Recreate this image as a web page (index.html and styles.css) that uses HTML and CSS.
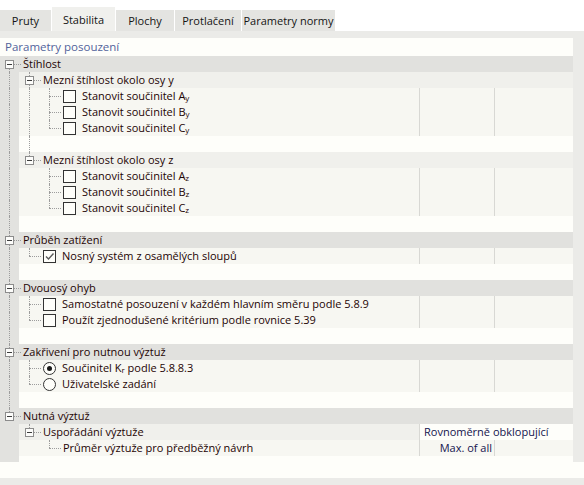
FILE: index.html
```html
<!DOCTYPE html>
<html lang="cs">
<head>
<meta charset="utf-8">
<title>Stabilita</title>
<link rel="stylesheet" href="styles.css">
</head>
<body>
<div class="tabs">
  <div class="tab t1">Pruty</div>
  <div class="tab t2 active">Stabilita</div>
  <div class="tab t3">Plochy</div>
  <div class="tab t4">Protlačení</div>
  <div class="tab t5">Parametry normy</div>
</div>
<div class="panel">
  <div class="pm">
    <div class="tree">
      <div class="hdr">Parametry posouzení</div>

      <div class="row grp"><span class="g vb h"><i class="bx"></i></span><span class="lbl">Štíhlost</span></div>
      <div class="row sub"><span class="g v"></span><span class="c v h"><i class="bx"></i></span><span class="lbl">Mezní štíhlost okolo osy y</span></div>
      <div class="row item"><span class="g v"></span><span class="c v"></span><span class="c v h"></span><span class="lbl"><i class="cb"></i>Stanovit součinitel A<span class="s">y</span></span><span class="col2"></span><span class="col3"></span></div>
      <div class="row item"><span class="g v"></span><span class="c v"></span><span class="c v h"></span><span class="lbl"><i class="cb"></i>Stanovit součinitel B<span class="s">y</span></span><span class="col2"></span><span class="col3"></span></div>
      <div class="row item"><span class="g v"></span><span class="c v"></span><span class="c vt h"></span><span class="lbl"><i class="cb"></i>Stanovit součinitel C<span class="s">y</span></span><span class="col2"></span><span class="col3"></span></div>
      <div class="row gap"><span class="g v"></span><span class="c v"></span></div>
      <div class="row sub"><span class="g v"></span><span class="c vt h"><i class="bx"></i></span><span class="lbl">Mezní štíhlost okolo osy z</span></div>
      <div class="row item"><span class="g v"></span><span class="c"></span><span class="c v h"></span><span class="lbl"><i class="cb"></i>Stanovit součinitel A<span class="s">z</span></span><span class="col2"></span><span class="col3"></span></div>
      <div class="row item"><span class="g v"></span><span class="c"></span><span class="c v h"></span><span class="lbl"><i class="cb"></i>Stanovit součinitel B<span class="s">z</span></span><span class="col2"></span><span class="col3"></span></div>
      <div class="row item"><span class="g v"></span><span class="c"></span><span class="c vt h"></span><span class="lbl"><i class="cb"></i>Stanovit součinitel C<span class="s">z</span></span><span class="col2"></span><span class="col3"></span></div>
      <div class="row gap"><span class="g v"></span></div>

      <div class="row grp"><span class="g v h"><i class="bx"></i></span><span class="lbl">Průběh zatížení</span></div>
      <div class="row item"><span class="g v"></span><span class="c vt h"></span><span class="lbl"><i class="cb on"><svg width="11" height="11" viewBox="0 0 11 11"><path d="M2 5.5 L4.5 8 L9.5 2.5" fill="none" stroke="#5a5a5a" stroke-width="1.4"/></svg></i>Nosný systém z osamělých sloupů</span><span class="col2"></span><span class="col3"></span></div>
      <div class="row gap"><span class="g v"></span></div>

      <div class="row grp"><span class="g v h"><i class="bx"></i></span><span class="lbl">Dvouosý ohyb</span></div>
      <div class="row item"><span class="g v"></span><span class="c v h"></span><span class="lbl"><i class="cb"></i>Samostatné posouzení v každém hlavním směru podle 5.8.9</span><span class="col2"></span><span class="col3"></span></div>
      <div class="row item"><span class="g v"></span><span class="c vt h"></span><span class="lbl"><i class="cb"></i>Použít zjednodušené kritérium podle rovnice 5.39</span><span class="col2"></span><span class="col3"></span></div>
      <div class="row gap"><span class="g v"></span></div>

      <div class="row grp"><span class="g v h"><i class="bx"></i></span><span class="lbl">Zakřivení pro nutnou výztuž</span></div>
      <div class="row item"><span class="g v"></span><span class="c v h"></span><span class="lbl"><i class="rb on"></i>Součinitel K<span class="s">r</span>&nbsp;podle 5.8.8.3</span><span class="col2"></span><span class="col3"></span></div>
      <div class="row item"><span class="g v"></span><span class="c vt h"></span><span class="lbl"><i class="rb"></i>Uživatelské zadání</span><span class="col2"></span><span class="col3"></span></div>
      <div class="row gap"><span class="g v"></span></div>

      <div class="row grp"><span class="g vt h"><i class="bx"></i></span><span class="lbl">Nutná výztuž</span></div>
      <div class="row sub"><span class="g"></span><span class="c vt h"><i class="bx"></i></span><span class="lbl">Uspořádání výztuže</span><span class="colw">Rovnoměrně obklopující</span></div>
      <div class="row item"><span class="g"></span><span class="c"></span><span class="c vt h"></span><span class="lbl">Průměr výztuže pro předběžný návrh</span><span class="col2 val">Max. of all</span><span class="col3"></span></div>
      <div class="tail"><span class="g"></span></div>
    </div>
    <div class="vbar"></div>
  </div>
  <div class="hband"></div>
</div>
</body>
</html>
```

FILE: styles.css
```css
body {
  margin: 0;
  font-family: "Open Sans", "Noto Sans", sans-serif;
  font-size: 11px;
  color: #1e0404;
  background: #ebebe8;
}

.tabs {
  display: flex;
  align-items: flex-end;
  gap: 1px;
  height: 31px;
  background: #ffffff;
}
.tab {
  height: 21px;
  line-height: 21px;
  text-align: center;
  white-space: nowrap;
  background: #e4e4e1;
  color: #141414;
}
.tab.active {
  height: 24px;
  line-height: 26px;
  background: #f0f0ed;
}
.t1 { width: 51px; }
.t2 { width: 63px; }
.t3 { width: 58px; }
.t4 { width: 66px; }
.t5 { width: 93px; }

.panel {
  padding: 7px 0;
}
.pm {
  display: flex;
}
.tree {
  width: 573px;
  background: #fefefa;
}
.vbar {
  flex: 1;
}
.hband {
  height: 16px;
  background: #fefefa;
}

.hdr {
  height: 18px;
  line-height: 18px;
  padding-left: 5px;
  font-size: 11.5px;
  color: #52639a;
}

.row {
  display: flex;
  height: 16px;
  line-height: 16px;
}
.row.grp { background: #e1e1de; }
.row.sub { background: #f0f0ec; }
.row.item { background: #f7f7f2; }
.row.gap { background: #fefefa; }

.tail {
  display: flex;
  height: 6px;
}

.g, .c {
  position: relative;
  flex: none;
  height: 100%;
}
.g {
  width: 19px;
  background: #e2e2df;
}
.c {
  width: 20px;
}

.v::before,
.vt::before,
.vb::before {
  content: "";
  position: absolute;
  left: 10px;
  top: 0;
  bottom: 0;
  border-left: 1px dotted #9c9c9c;
}
.g.v::before, .g.vt::before, .g.vb::before { left: 9px; }
.vt::before { bottom: 8px; }
.vb::before { top: 8px; }

.h::after {
  content: "";
  position: absolute;
  left: 10px;
  right: -2px;
  top: 8px;
  border-top: 1px dotted #9c9c9c;
}
.g.h::after { left: 9px; }

.bx {
  position: absolute;
  left: 6px;
  top: 4px;
  width: 7px;
  height: 7px;
  border: 1px solid #8c8c8c;
  background: #fcfcfa;
  z-index: 1;
}
.g .bx { left: 5px; }
.bx::after {
  content: "";
  position: absolute;
  left: 1px;
  top: 3px;
  width: 5px;
  height: 1px;
  background: #3c3c3c;
}

.lbl {
  flex: 1;
  display: flex;
  align-items: center;
  padding-left: 4px;
  white-space: nowrap;
  min-width: 0;
}
.s {
  font-size: 8px;
  position: relative;
  top: 2px;
}

.cb {
  flex: none;
  width: 11px;
  height: 11px;
  border: 1px solid #333333;
  background: #fefefa;
  margin-right: 6px;
  display: flex;
}
.rb {
  flex: none;
  width: 11px;
  height: 11px;
  border: 1px solid #333333;
  border-radius: 50%;
  background: #fefefa;
  margin-right: 6px;
  display: flex;
  align-items: center;
  justify-content: center;
}
.rb.on::after {
  content: "";
  width: 5px;
  height: 5px;
  border-radius: 50%;
  background: #1a1a1a;
}

.col2 {
  flex: none;
  width: 74px;
  border-left: 1px solid #d8d8d4;
}
.col3 {
  flex: none;
  width: 78px;
  border-left: 1px solid #d8d8d4;
}
.col2.val {
  text-align: right;
  padding-right: 2px;
  width: 72px;
  color: #14144e;
  white-space: nowrap;
}
.colw {
  flex: none;
  width: 149px;
  padding-left: 4px;
  border-left: 1px solid #d8d8d4;
  background: #fefefa;
  color: #14144e;
  white-space: nowrap;
}
```
